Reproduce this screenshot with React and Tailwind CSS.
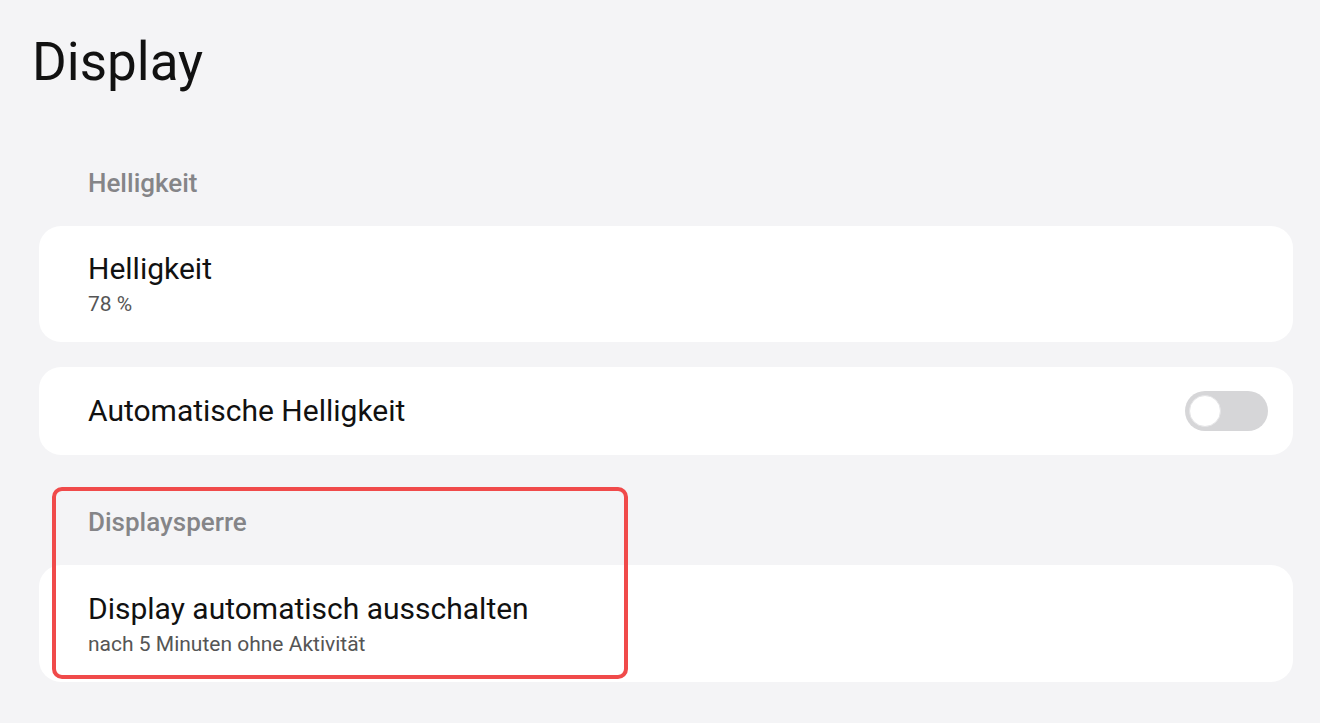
import React from 'react';

function Card({ title, sub, right, className = '' }) {
  return (
    <div className={`bg-white rounded-[22px] flex items-center justify-between px-[49px] ${className}`}>
      <div className="flex flex-col">
        <span className="text-[30px] leading-[36px] text-[#111]">{title}</span>
        {sub && <span className="text-[21px] leading-[26px] text-[#555] mt-[4px]">{sub}</span>}
      </div>
      {right}
    </div>
  );
}

function Toggle() {
  return (
    <div className="w-[83px] h-[40px] rounded-full bg-[#d6d6d8] flex items-center px-[4px] -mr-[24px]">
      <div className="w-[32px] h-[32px] rounded-full bg-white border border-[#e4e4e6]" />
    </div>
  );
}

export default function App() {
  return (
    <div
      className="w-[1320px] h-[723px] bg-[#f4f4f6] overflow-hidden relative"
      style={{ fontFamily: 'Roboto, "Liberation Sans", sans-serif' }}
    >
      <div className="pl-[32px] pt-[30px]">
        <h1 className="text-[53px] leading-[64px] text-[#111]">Display</h1>
      </div>

      <div className="pl-[39px] pr-[27px] mt-[73px]">
        <div className="pl-[49px] text-[26px] leading-[32px] font-medium text-[#858588]">Helligkeit</div>
        <Card title="Helligkeit" sub="78 %" className="h-[116px] mt-[27px]" />
        <Card title="Automatische Helligkeit" right={<Toggle />} className="h-[88px] mt-[25px]" />
        <div className="pl-[49px] text-[26px] leading-[32px] font-medium text-[#858588] mt-[51px]">Displaysperre</div>
        <Card
          title="Display automatisch ausschalten"
          sub="nach 5 Minuten ohne Aktivität"
          className="h-[117px] mt-[27px]"
        />
      </div>

      <div className="absolute left-[52px] top-[487px] w-[576px] h-[192px] border-[4px] border-[#f04a4a] rounded-[10px]" />
    </div>
  );
}
